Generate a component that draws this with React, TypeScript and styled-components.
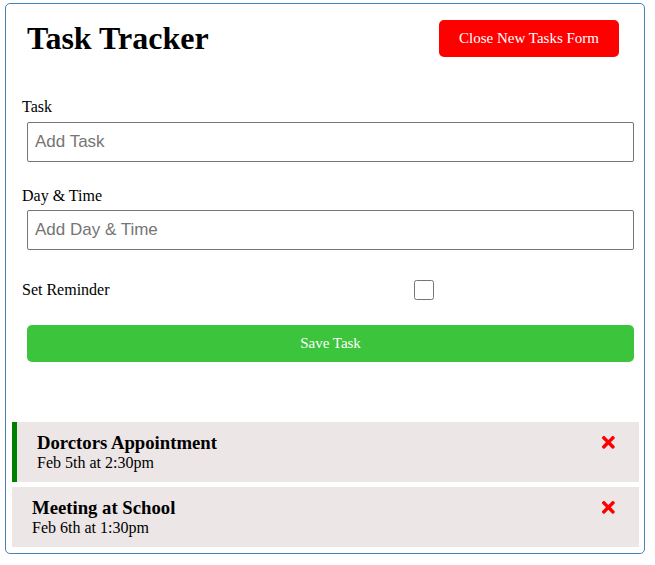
import React, { useState } from "react";
import styled, { createGlobalStyle } from "styled-components";
import { FaTimes } from "react-icons/fa";

const GlobalStyle = createGlobalStyle`
  * { box-sizing: border-box; }
  body {
    margin: 0;
    background: #fff;
    font-family: "Liberation Serif", "Times New Roman", serif;
    font-size: 16px;
    color: #000;
  }
`;

const Container = styled.div`
  margin: 3px 0 0 5px;
  width: 640px;
  border: 1px solid steelblue;
  border-radius: 5px;
  background: #fff;
`;

const Header = styled.header`
  display: flex;
  justify-content: space-between;
  align-items: center;
  padding: 11px 20px 11px 20px;
`;

const Title = styled.h1`
  margin: 0;
  font-size: 32px;
  font-weight: bold;
  padding-left: 1px;
`;

const Button = styled.button<{ $bg: string; $block?: boolean }>`
  display: ${(p) => (p.$block ? "block" : "inline-block")};
  background: ${(p) => p.$bg};
  color: #fff;
  border: none;
  border-radius: 5px;
  padding: 10px 20px;
  margin: ${(p) => (p.$block ? "0 0 0 5px" : "5px")};
  width: ${(p) => (p.$block ? "calc(100% - 5px)" : "auto")};
  font-family: "Liberation Serif", "Times New Roman", serif;
  font-size: 15px;
  line-height: 17px;
  cursor: pointer;
`;

const Form = styled.form`
  display: flow-root;
  padding: 25px 10px 54px 16px;
`;

const FormControl = styled.div`
  display: flow-root;
  margin: 0 0 25px 0;
`;

const Label = styled.label`
  display: block;
  font-size: 16px;
  line-height: 18.5px;
`;

const TextInput = styled.input`
  display: block;
  width: calc(100% - 5px);
  height: 40px;
  margin: 5px 0 0 5px;
  padding: 3px 7px;
  font-size: 17px;
  font-family: "Liberation Sans", Arial, sans-serif;
  border: 1px solid #767676;
  border-radius: 2px;
  color: #000;
  &::placeholder { color: #757575; }
`;

const CheckRow = styled.div`
  display: flex;
  align-items: center;
  height: 30px;
  margin: 0 9px 20px 0;
`;

const CheckLabel = styled.label`
  flex: 1;
  font-size: 16px;
  line-height: 18.5px;
`;

const CheckWrap = styled.div`
  flex: 2;
  display: flex;
  justify-content: center;
`;

const CheckBox = styled.input`
  width: 20px;
  height: 20px;
  margin: 0;
`;

const TaskList = styled.div`
  display: flex;
  flex-direction: column;
  gap: 5px;
  padding: 6px 5px 6px 6px;
`;

const TaskItem = styled.div<{ $reminder: boolean }>`
  background: #ece6e6;
  padding: 10px 20px;
  border-left: ${(p) => (p.$reminder ? "5px solid green" : "none")};
  cursor: pointer;
`;

const TaskTitle = styled.h3`
  margin: 0;
  font-size: 18.72px;
  font-weight: bold;
  line-height: 21.5px;
  display: flex;
  justify-content: space-between;
  align-items: center;
`;

const DeleteIcon = styled(FaTimes)`
  color: red;
  margin-right: 1px;
  cursor: pointer;
`;

const TaskDay = styled.p`
  margin: 0;
  font-size: 16px;
  line-height: 18.5px;
`;

const tasks = [
  { id: 1, text: "Dorctors Appointment", day: "Feb 5th at 2:30pm", reminder: true },
  { id: 2, text: "Meeting at School", day: "Feb 6th at 1:30pm", reminder: false },
];

export default function App() {
  const [reminder, setReminder] = useState(false);
  return (
    <>
      <GlobalStyle />
      <Container>
        <Header>
          <Title>Task Tracker</Title>
          <Button $bg="red">Close New Tasks Form</Button>
        </Header>
        <Form onSubmit={(e) => e.preventDefault()}>
          <FormControl>
            <Label>Task</Label>
            <TextInput type="text" placeholder="Add Task" />
          </FormControl>
          <FormControl>
            <Label>Day &amp; Time</Label>
            <TextInput type="text" placeholder="Add Day & Time" />
          </FormControl>
          <CheckRow>
            <CheckLabel>Set Reminder</CheckLabel>
            <CheckWrap>
              <CheckBox
                type="checkbox"
                checked={reminder}
                onChange={(e) => setReminder(e.currentTarget.checked)}
              />
            </CheckWrap>
          </CheckRow>
          <Button $bg="#3cc43c" $block type="submit">
            Save Task
          </Button>
        </Form>
        <TaskList>
          {tasks.map((t) => (
            <TaskItem key={t.id} $reminder={t.reminder}>
              <TaskTitle>
                {t.text}
                <DeleteIcon />
              </TaskTitle>
              <TaskDay>{t.day}</TaskDay>
            </TaskItem>
          ))}
        </TaskList>
      </Container>
    </>
  );
}
